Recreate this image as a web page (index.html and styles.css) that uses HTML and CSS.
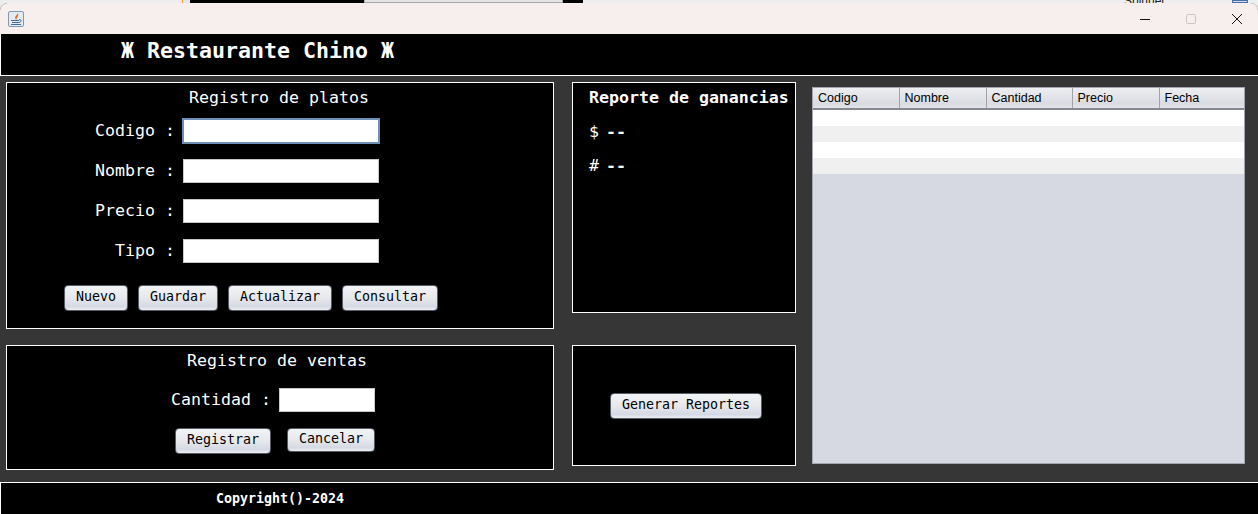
FILE: index.html
```html
<!DOCTYPE html>
<html lang="es">
<head>
<meta charset="UTF-8">
<title>Restaurante Chino</title>
<link rel="stylesheet" href="styles.css">
</head>
<body>
  <div class="behind">
    <div class="behind-tab"></div>
    <div class="behind-dark"></div>
    <div class="behind-gray"></div>
    <div class="behind-dark short"></div>
    <div class="behind-label">Spinner</div>
    <div class="behind-blue"></div>
  </div>
  <div class="window">
    <div class="titlebar">
      <svg class="java-icon" width="16" height="16" viewBox="0 0 16 16">
        <rect x="0.5" y="0.5" width="15" height="15" rx="1.5" fill="#e4eaf1" stroke="#8497ac"/>
        <path d="M9.5 1.5c1 2.5-3.500 3.500-2 6.500.3.5.8.8 1.200.8-1-2.300 3.200-3.300.8-7.300z" fill="#e8661c"/>
        <path d="M3 9h8v1H3zM4 11h7v1H4zM3 13h10v1H3z" fill="#3f6d9c"/>
        <path d="M11 8.500c3 0 2.500 2.500 0 3" fill="none" stroke="#3f6d9c"/>
      </svg>
      <div class="controls">
        <svg width="10" height="10" viewBox="0 0 10 10"><path d="M0 5.500h10" stroke="#111"/></svg>
        <svg width="10" height="10" viewBox="0 0 10 10"><rect x="0.500" y="0.500" width="9" height="9" rx="1" fill="none" stroke="#c8c4c4"/></svg>
        <svg width="10" height="10" viewBox="0 0 10 10"><path d="M0 0l10 10M10 0L0 10" stroke="#111"/></svg>
      </div>
    </div>
    <header class="header">
      <h1>Ж Restaurante Chino Ж</h1>
    </header>
    <main class="main">
      <div class="col-left">
        <section class="panel platos">
          <h2>Registro de platos</h2>
          <div class="form-row"><label>Codigo :</label><input class="field focused" type="text"></div>
          <div class="form-row"><label>Nombre :</label><input class="field" type="text"></div>
          <div class="form-row"><label>Precio :</label><input class="field" type="text"></div>
          <div class="form-row"><label>Tipo :</label><input class="field" type="text"></div>
          <div class="btn-row">
            <button class="w64">Nuevo</button>
            <button class="w80">Guardar</button>
            <button class="w104">Actualizar</button>
            <button class="w96">Consultar</button>
          </div>
        </section>
        <section class="panel ventas">
          <h2>Registro de ventas</h2>
          <div class="venta-row"><label>Cantidad :</label><input class="field small" type="text"></div>
          <div class="venta-btns">
            <button class="w96">Registrar</button>
            <button class="w88 short">Cancelar</button>
          </div>
        </section>
      </div>
      <div class="col-mid">
        <section class="panel reporte">
          <h3>Reporte de ganancias</h3>
          <p class="stat"><span>$</span><b>--</b></p>
          <p class="stat"><span>#</span><b>--</b></p>
        </section>
        <section class="panel generar">
          <button class="w152">Generar Reportes</button>
        </section>
      </div>
      <div class="table-wrap">
        <table>
          <thead>
            <tr><th>Codigo</th><th>Nombre</th><th>Cantidad</th><th>Precio</th><th>Fecha</th></tr>
          </thead>
          <tbody>
            <tr><td></td><td></td><td></td><td></td><td></td></tr>
            <tr><td></td><td></td><td></td><td></td><td></td></tr>
            <tr><td></td><td></td><td></td><td></td><td></td></tr>
            <tr><td></td><td></td><td></td><td></td><td></td></tr>
          </tbody>
        </table>
      </div>
    </main>
    <footer class="footer">Copyright()-2024</footer>
  </div>
</body>
</html>
```

FILE: styles.css
```css
html, body {
  margin: 0;
  padding: 0;
  height: 514px;
  overflow: hidden;
}
body {
  background-color: #ececec;
  font-family: "DejaVu Sans Mono", monospace;
}
.behind {
  height: 3px;
  display: flex;
  background-color: #eeeeee;
  overflow: hidden;
}
.behind-tab {
  width: 8px;
  height: 3px;
  margin-left: 182px;
  background: linear-gradient(90deg, #f0a030 1px, #e6e6ee 1px);
}
.behind-dark {
  width: 174px;
  height: 3px;
  background-color: #000;
}
.behind-dark.short { width: 20px; }
.behind-gray {
  box-sizing: border-box;
  width: 199px;
  height: 3px;
  background-color: #e4e4e4;
  border: 1px solid #a8a8a8;
  border-top: none;
}
.behind-label {
  font: 12px "Liberation Sans", sans-serif;
  line-height: 3px;
  margin-left: 541px;
  width: 108px;
  color: #222;
}
.behind-blue {
  box-sizing: border-box;
  width: 16px;
  height: 3px;
  background-color: #cfdcf0;
  border: 1px solid #4a6ea8;
}
.window {
  height: 511px;
  display: flex;
  flex-direction: column;
  background-color: #363636;
  border-radius: 8px 8px 0 0;
  overflow: hidden;
}
.titlebar {
  flex: 0 0 31px;
  background-color: #f7efee;
  display: flex;
  align-items: center;
  justify-content: space-between;
  padding: 0 16px 0 8px;
}
.controls {
  display: flex;
  gap: 36px;
}
.header {
  flex: 0 0 42px;
  box-sizing: border-box;
  background-color: #000;
  border-left: 1px solid #fff;
  border-bottom: 1px solid #fff;
  display: flex;
  align-items: center;
  padding-left: 120px;
}
h1 {
  margin: 0 0 8px;
  font-size: 21.6px;
  color: #fff;
  font-weight: bold;
  white-space: pre;
}
.main {
  flex: 1;
  display: grid;
  grid-template-columns: 548px 258px 433px;
  padding: 6px 0 0 6px;
}
.col-left, .col-mid {
  display: flex;
  flex-direction: column;
}
.col-mid { margin: 0 16px 0 18px; }
.panel {
  box-sizing: border-box;
  background-color: #000;
  border: 1px solid #fff;
  color: #fff;
}
h2 {
  margin: 0;
  font-size: 16.6px;
  font-weight: normal;
  text-align: center;
  line-height: 28px;
}
.platos {
  height: 247px;
  margin-bottom: 16px;
}
.platos h2 {
  line-height: 30px;
  padding-right: 2px;
}
.ventas h2 { padding-right: 6px; }
.form-row {
  display: flex;
  align-items: center;
  height: 24px;
  margin-bottom: 16px;
}
.platos h2 + .form-row { margin-top: 6px; }
.form-row label {
  width: 168px;
  text-align: right;
  margin: 0 8px 2px 0;
  font-size: 16.6px;
}
.field {
  box-sizing: border-box;
  width: 196px;
  height: 24px;
  border: 1px solid #c9c9c9;
  background-color: #fff;
  padding: 0;
  outline: none;
}
.field.focused {
  border-color: #6d8fb3;
  box-shadow: 0 0 0 1px #6d8fb3;
}
.btn-row {
  display: flex;
  gap: 10px;
  padding: 6px 0 0 57px;
}
button {
  box-sizing: border-box;
  height: 26px;
  padding: 0 0 3px;
  border: 1px solid #565b66;
  border-radius: 4px;
  background: linear-gradient(#f2f3f5, #e6e8ec 50%, #d5d9e3 85%, #eceef2);
  font-family: "DejaVu Sans Mono", monospace;
  font-size: 13.3px;
  color: #000;
}
.w64 { width: 64px; }
.w80 { width: 80px; }
.w88 { width: 88px; }
.w96 { width: 96px; }
.w104 { width: 104px; }
.w152 { width: 152px; }
button.short { height: 24px; }
.ventas {
  height: 125px;
  padding-top: 1px;
}
.venta-row {
  display: flex;
  align-items: center;
  padding-left: 164px;
  margin-top: 13px;
}
.venta-row label {
  font-size: 16.6px;
  margin: 0 8px 2px 0;
}
.field.small { width: 96px; }
.venta-btns {
  display: flex;
  align-items: flex-start;
  gap: 16px;
  padding: 16px 0 0 168px;
}
.reporte {
  height: 231px;
  margin-bottom: 32px;
  padding: 1px 0 0 16px;
}
h3 {
  margin: 0 0 10px;
  font-size: 16.6px;
  line-height: 28px;
  font-weight: bold;
}
.stat {
  display: flex;
  margin: 0 0 14px;
  font-size: 16.6px;
  line-height: 20px;
}
.stat span { width: 17px; }
.generar {
  height: 121px;
  padding: 47px 0 0 37px;
}
.table-wrap {
  box-sizing: border-box;
  height: 377px;
  margin-top: 5px;
  background-color: #d6d9e2;
  border: 1px solid #a3a6ae;
}
table {
  width: 100%;
  border-collapse: collapse;
  table-layout: fixed;
  font-family: "Liberation Sans", sans-serif;
}
th {
  height: 21px;
  padding: 0 0 0 5px;
  box-sizing: border-box;
  font-size: 12.5px;
  font-weight: normal;
  text-align: left;
  color: #000;
  background: linear-gradient(#eceef1, #d9dbe1 80%, #e2e4e9);
  border-right: 1px solid #a0a3ab;
  border-bottom: 2px solid #85888f;
}
th:nth-child(odd) { width: 86px; }
th:nth-child(even) { width: 87px; }
th:last-child { border-right: none; width: auto; }
td { height: 16px; padding: 0; background-color: #fff; }
tr:nth-child(even) td { background-color: #f0f0f0; }
.footer {
  flex: 0 0 32px;
  box-sizing: border-box;
  background-color: #000;
  border-top: 1px solid #fff;
  border-left: 1px solid #fff;
  color: #fff;
  font-size: 13.3px;
  font-weight: bold;
  padding: 8px 0 0 215px;
}
```
